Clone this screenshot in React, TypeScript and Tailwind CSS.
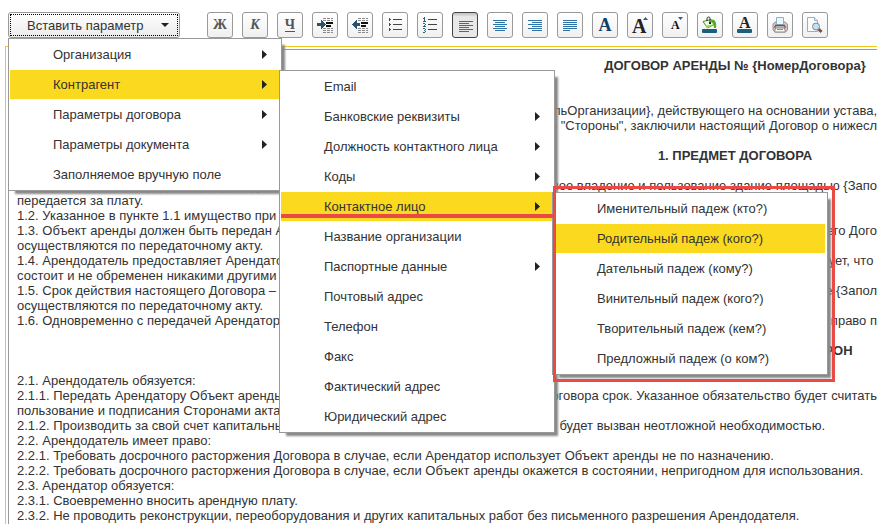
import React, { useState } from 'react';
import clsx from 'clsx';

interface MenuEntry {
  label: string;
  arrow?: boolean;
  underlined?: boolean;
  children?: MenuEntry[];
}

interface DocLine {
  text?: string;
  tail?: string;
  heading?: boolean;
  inset?: boolean;
}

const MENU: MenuEntry[] = [
  { label: 'Организация', arrow: true },
  {
    label: 'Контрагент',
    arrow: true,
    children: [
      { label: 'Email' },
      { label: 'Банковские реквизиты', arrow: true },
      { label: 'Должность контактного лица', arrow: true },
      { label: 'Коды', arrow: true },
      {
        label: 'Контактное лицо',
        arrow: true,
        underlined: true,
        children: [
          { label: 'Именительный падеж (кто?)' },
          { label: 'Родительный падеж (кого?)' },
          { label: 'Дательный падеж (кому?)' },
          { label: 'Винительный падеж (кого?)' },
          { label: 'Творительный падеж (кем?)' },
          { label: 'Предложный падеж (о ком?)' },
        ],
      },
      { label: 'Название организации' },
      { label: 'Паспортные данные', arrow: true },
      { label: 'Почтовый адрес' },
      { label: 'Телефон' },
      { label: 'Факс' },
      { label: 'Фактический адрес' },
      { label: 'Юридический адрес' },
    ],
  },
  { label: 'Параметры договора', arrow: true },
  { label: 'Параметры документа', arrow: true },
  { label: 'Заполняемое вручную поле' },
];

const LINES: DocLine[] = [
  { text: 'ДОГОВОР АРЕНДЫ № {НомерДоговора}', heading: true },
  {},
  {},
  { tail: 'льОрганизации}, действующего на основании устава,' },
  { tail: 'е "Стороны", заключили настоящий Договор о нижесл' },
  {},
  { text: '1. ПРЕДМЕТ ДОГОВОРА', heading: true },
  {},
  { text: '1.1. Арендодатель передает Арендатору', tail: 'ное владение и пользование здание площадью {Запо' },
  { text: 'передается за плату.' },
  { text: '1.2. Указанное в пункте 1.1 имущество при' },
  { text: '1.3. Объект аренды должен быть передан А', tail: 'его Дого' },
  { text: 'осуществляются по передаточному акту.' },
  { text: '1.4. Арендодатель предоставляет Арендато', tail: 'ует, что\u00a0' },
  { text: 'состоит и не обременен никакими другими о' },
  { text: '1.5. Срок действия настоящего Договора –', tail: 'ее {Запол' },
  { text: 'осуществляются по передаточному акту.' },
  { text: '1.6. Одновременно с передачей Арендатор', tail: 'и право п' },
  {},
  { text: '2. ПРАВА И ОБЯЗАННОСТИ СТОРОН', heading: true },
  {},
  { text: '2.1. Арендодатель обязуется:' },
  { text: '2.1.1. Передать Арендатору Объект аренды', tail: 'оговора срок. Указанное обязательство будет считать' },
  { text: 'пользование и подписания Сторонами акта' },
  { text: '2.1.2. Производить за свой счет капитальны', tail: 'т будет вызван неотложной необходимостью.', inset: true },
  { text: '2.2. Арендодатель имеет право:' },
  { text: '2.2.1. Требовать досрочного расторжения Договора в случае, если Арендатор использует Объект аренды не по назначению.' },
  { text: '2.2.2. Требовать досрочного расторжения Договора в случае, если Объект аренды окажется в состоянии, непригодном для использования.' },
  { text: '2.3. Арендатор обязуется:' },
  { text: '2.3.1. Своевременно вносить арендную плату.' },
  { text: '2.3.2. Не проводить реконструкции, переоборудования и других капитальных работ без письменного разрешения Арендодателя.' },
];

const Icon: React.FC<{ children: React.ReactNode; smooth?: boolean }> = ({ children, smooth }) => (
  <svg viewBox="1 1 24 24" className="w-6 h-6" shapeRendering={smooth ? 'auto' : 'crispEdges'} aria-hidden="true">
    {children}
  </svg>
);

const AlignIcon = ({ rows, y = 8 }: { rows: [number, number][]; y?: number }) => (
  <Icon>
    {rows.map(([x, w], i) => (
      <rect key={i} x={x} y={y + i * 2} width={w} height="1" fill="#2f73a6" />
    ))}
  </Icon>
);

const IndentLines = ({ x }: { x: number }) => (
  <>
    <path
      d={`M${x} 6.5h10M${x} 8.5h10M${x} 16.5h10M${x} 18.5h10M${x} 20.5h10`}
      stroke="#8a8a8a"
      strokeDasharray="3 1"
    />
    <path d={`M${x + 3} 10h7v2h-7zM${x + 3} 13h5v2h-5z`} fill="#111" />
  </>
);

const TOOLS: { title: string; pressed?: boolean; icon: React.ReactNode }[] = [
  { title: 'Полужирный', icon: <span className="font-bold">Ж</span> },
  { title: 'Курсив', icon: <span className="font-bold italic">К</span> },
  { title: 'Подчеркнутый', icon: <span className="font-bold border-b border-[#555]">Ч</span> },
  {
    title: 'Увеличить отступ',
    icon: (
      <Icon>
        <IndentLines x={11} />
        <path d="M5 11h4V8h1v1h1v1h1v1h1v1h1v1h-1v1h-1v1h-1v1h-1v1H9v-3H5z" fill="#28536f" />
      </Icon>
    ),
  },
  {
    title: 'Уменьшить отступ',
    icon: (
      <Icon>
        <IndentLines x={11} />
        <path d="M13 11h-3V8H9v1H8v1H7v1H6v1H5v1h1v1h1v1h1v1h1v1h1v-3h3z" fill="#28536f" />
      </Icon>
    ),
  },
  {
    title: 'Маркированный список',
    icon: (
      <Icon>
        <path d="M7 6h1v1h1v1H8v1H7zM7 11h1v1h1v1H8v1H7zM7 16h1v1h1v1H8v1H7z" fill="#28536f" />
        <path d="M11 7.500h9M11 12.500h9M11 17.500h9" stroke="#444" />
      </Icon>
    ),
  },
  {
    title: 'Нумерованный список',
    icon: (
      <Icon>
        <path
          d="M7 5h1v4H7zM6 6h1v1H6zM6 9h3v1H6zM6 11h2v1H6zM8 12h1v1H8zM7 13h1v1H7zM6 14h3v1H6zM6 16h2v1H6zM8 17h1v1H8zM7 18h1v1H7zM8 19h1v1H8zM6 20h2v1H6z"
          fill="#28637f"
        />
        <path d="M11 7.500h9M11 12.500h9M11 17.500h9" stroke="#444" />
      </Icon>
    ),
  },
  {
    title: 'По левому краю',
    pressed: true,
    icon: <AlignIcon y={9} rows={[[7, 14], [7, 10], [7, 14], [7, 10], [7, 14], [7, 10]]} />,
  },
  {
    title: 'По центру',
    icon: <AlignIcon rows={[[6, 14], [8, 10], [6, 14], [8, 10], [6, 14], [8, 10]]} />,
  },
  {
    title: 'По правому краю',
    icon: <AlignIcon rows={[[6, 14], [10, 10], [6, 14], [10, 10], [6, 14], [10, 10]]} />,
  },
  {
    title: 'По ширине',
    icon: <AlignIcon rows={[[6, 14], [6, 14], [6, 14], [6, 14], [6, 14], [6, 7]]} />,
  },
  {
    title: 'Шрифт',
    icon: <span className="font-bold text-lg text-[#0f4066]">A</span>,
  },
  {
    title: 'Увеличить шрифт',
    icon: (
      <Icon smooth>
        <text x="5" y="21" fontSize="20" fontWeight="bold" fill="#222">A</text>
        <path d="M16 8l2.500-3L21 8z" fill="#28637f" />
      </Icon>
    ),
  },
  {
    title: 'Уменьшить шрифт',
    icon: (
      <Icon smooth>
        <text x="9" y="17" fontSize="12" fontWeight="bold" fill="#111">A</text>
        <path d="M16 5h5l-2.500 3z" fill="#28637f" />
      </Icon>
    ),
  },
  {
    title: 'Цвет фона',
    icon: (
      <Icon smooth>
        <rect x="5" y="17" width="15" height="4" rx="1" fill="#1d5f7a" />
        <path d="M6 9.500l8-2 3 5-6.500 3.500z" fill="#eefbe0" stroke="#3f9a22" />
        <path d="M8.500 13.500l8-1-6 3.500z" fill="#9bd85f" />
        <path d="M10 9V6.500c0-2 3-2 3 0V11" fill="none" stroke="#222" />
        <rect x="12" y="10" width="2" height="2" fill="#222" />
        <path d="M14 7.500c4-.5 6 2.500 5 8.500h-2c0-3-.5-5-3-6z" fill="#4fae22" />
      </Icon>
    ),
  },
  {
    title: 'Цвет текста',
    icon: (
      <Icon smooth>
        <rect x="5" y="17" width="15" height="4" rx="1" fill="#1d5f7a" />
        <text x="7" y="16" fontSize="16" fontWeight="bold" fill="#222">A</text>
      </Icon>
    ),
  },
  {
    title: 'Печать',
    icon: (
      <Icon smooth>
        <path d="M6 12l2-2h10l2.500 2v6l-2 2H8l-2-2z" fill="#c9c9c9" stroke="#969696" />
        <path d="M9.500 5.500h7v7h-7z" fill="#edf5fc" stroke="#8fb0cc" />
        <path d="M8 13.500h10" stroke="#6b5a50" strokeWidth="1.500" />
        <path d="M8.500 16h9l1 4h-11z" fill="#fbf6f0" stroke="#8a8a8a" />
        <path d="M10 17.500h6" stroke="#d07a4a" />
        <path d="M7 15h2M17 15h2" stroke="#b5523a" strokeWidth="1.500" />
      </Icon>
    ),
  },
  {
    title: 'Просмотр',
    icon: (
      <Icon smooth>
        <path d="M5.500 5.500h7l3 3v11h-10z" fill="#fbfdff" stroke="#8fb0d0" />
        <path d="M12.500 5.500v3h3" fill="#dcebf7" stroke="#8fb0d0" />
        <path d="M16.500 17l3 3" stroke="#84503a" strokeWidth="3" />
        <circle cx="14" cy="14.500" r="3.500" fill="#bfe0f7" stroke="#7d8894" />
      </Icon>
    ),
  },
];

const Menu: React.FC<{
  items: MenuEntry[];
  active: string[];
  depth: number;
  onPick: (depth: number, label: string) => void;
}> = ({ items, active, depth, onPick }) => (
  <ul
    role="menu"
    className={clsx(
      'absolute bg-white border border-[#999] pt-px pl-px pr-0.5 shadow-[5px_5px_2px_-2px_#888]',
      depth === 0 ? 'left-0 top-full w-[274px] z-10' : 'left-full top-0 w-[276px] z-20'
    )}
  >
    {items.map((item) => {
      const isActive = active[depth] === item.label;
      return (
        <li key={item.label} role="none" className="relative h-[30px]">
          <button
            role="menuitem"
            onClick={() => onPick(depth, item.label)}
            className={clsx(
              'flex items-center justify-between w-full h-[29px] pl-[43px] pr-3 text-left',
              isActive ? 'bg-[#fbd91f]' : 'hover:bg-[#fff3b0]'
            )}
          >
            {item.label}
            {item.arrow && (
              <svg viewBox="0 0 5 9" className="w-[5px] h-[9px]" aria-hidden="true">
                <path d="M0 0l5 4.500L0 9z" fill="#222" />
              </svg>
            )}
          </button>
          {item.underlined && <div className="absolute left-0 -right-1 top-[22px] h-1 bg-[#ea4a44] z-30" />}
          {isActive && item.children && (
            <Menu items={item.children} active={active} depth={depth + 1} onPick={onPick} />
          )}
        </li>
      );
    })}
    {depth === 2 && (
      <li role="none" className="absolute left-0 -right-2 -top-[7px] -bottom-2 border-3 border-[#ea4a44] pointer-events-none" />
    )}
  </ul>
);

export default function App() {
  const [active, setActive] = useState(['Контрагент', 'Контактное лицо', 'Родительный падеж (кого?)']);

  const handlePick = (depth: number, label: string) => {
    setActive((prev) => [...prev.slice(0, depth), label]);
  };

  return (
    <div className="min-h-screen flex flex-col overflow-hidden bg-white text-[#333] text-[13px] leading-[15px] font-['Liberation_Sans',Arial,sans-serif]">
      {/* Toolbar */}
      <div className="flex items-start pt-3 pl-2 pb-2">
        <div className="relative shrink-0">
          <button className="flex items-center justify-between w-[172px] h-[26px] p-px border border-[#999] rounded-[3px] bg-linear-to-b from-white to-[#ebebeb]">
            <span className="flex items-center justify-between w-full h-full pl-4 pr-2 border border-dotted border-black">
              Вставить параметр
              <svg viewBox="0 0 8 4" className="w-2 h-1" aria-hidden="true">
                <path d="M0 0h8L4 4z" fill="#222" />
              </svg>
            </span>
          </button>
          <Menu items={MENU} active={active} depth={0} onPick={handlePick} />
        </div>
        <div className="flex gap-[9px] pl-[27px] font-['Liberation_Serif',serif]">
          {TOOLS.map((tool) => (
            <button
              key={tool.title}
              aria-label={tool.title}
              aria-pressed={tool.pressed}
              className={clsx(
                'flex items-center justify-center shrink-0 size-[26px] border rounded-[3px] text-sm leading-3 text-[#555]',
                tool.pressed
                  ? 'border-[#444] bg-linear-to-b from-[#c8c8c8] from-5% to-[#e8e8e8] to-15%'
                  : 'border-[#999] bg-linear-to-b from-white to-[#f0f0f0]'
              )}
            >
              {tool.icon}
            </button>
          ))}
        </div>
      </div>

      {/* Editor */}
      <div className="flex-1 flex ml-[5px] pl-0.5 pt-0.5 border-l border-t border-[#f2c81e]">
        <div className="flex-1 min-w-0 border-l border-t border-[#999] pt-2 pl-2 overflow-hidden whitespace-nowrap">
          {LINES.map((line, i) =>
            line.heading ? (
              <h2 key={i} className="w-[1436px] text-center font-bold">{line.text}</h2>
            ) : (
              <div key={i} className="flex justify-between h-[15px]">
                <p>{line.text}</p>
                {line.tail && <p className={clsx('ml-auto', line.inset && 'pr-[52px]')}>{line.tail}</p>}
              </div>
            )
          )}
        </div>
      </div>
    </div>
  );
}
